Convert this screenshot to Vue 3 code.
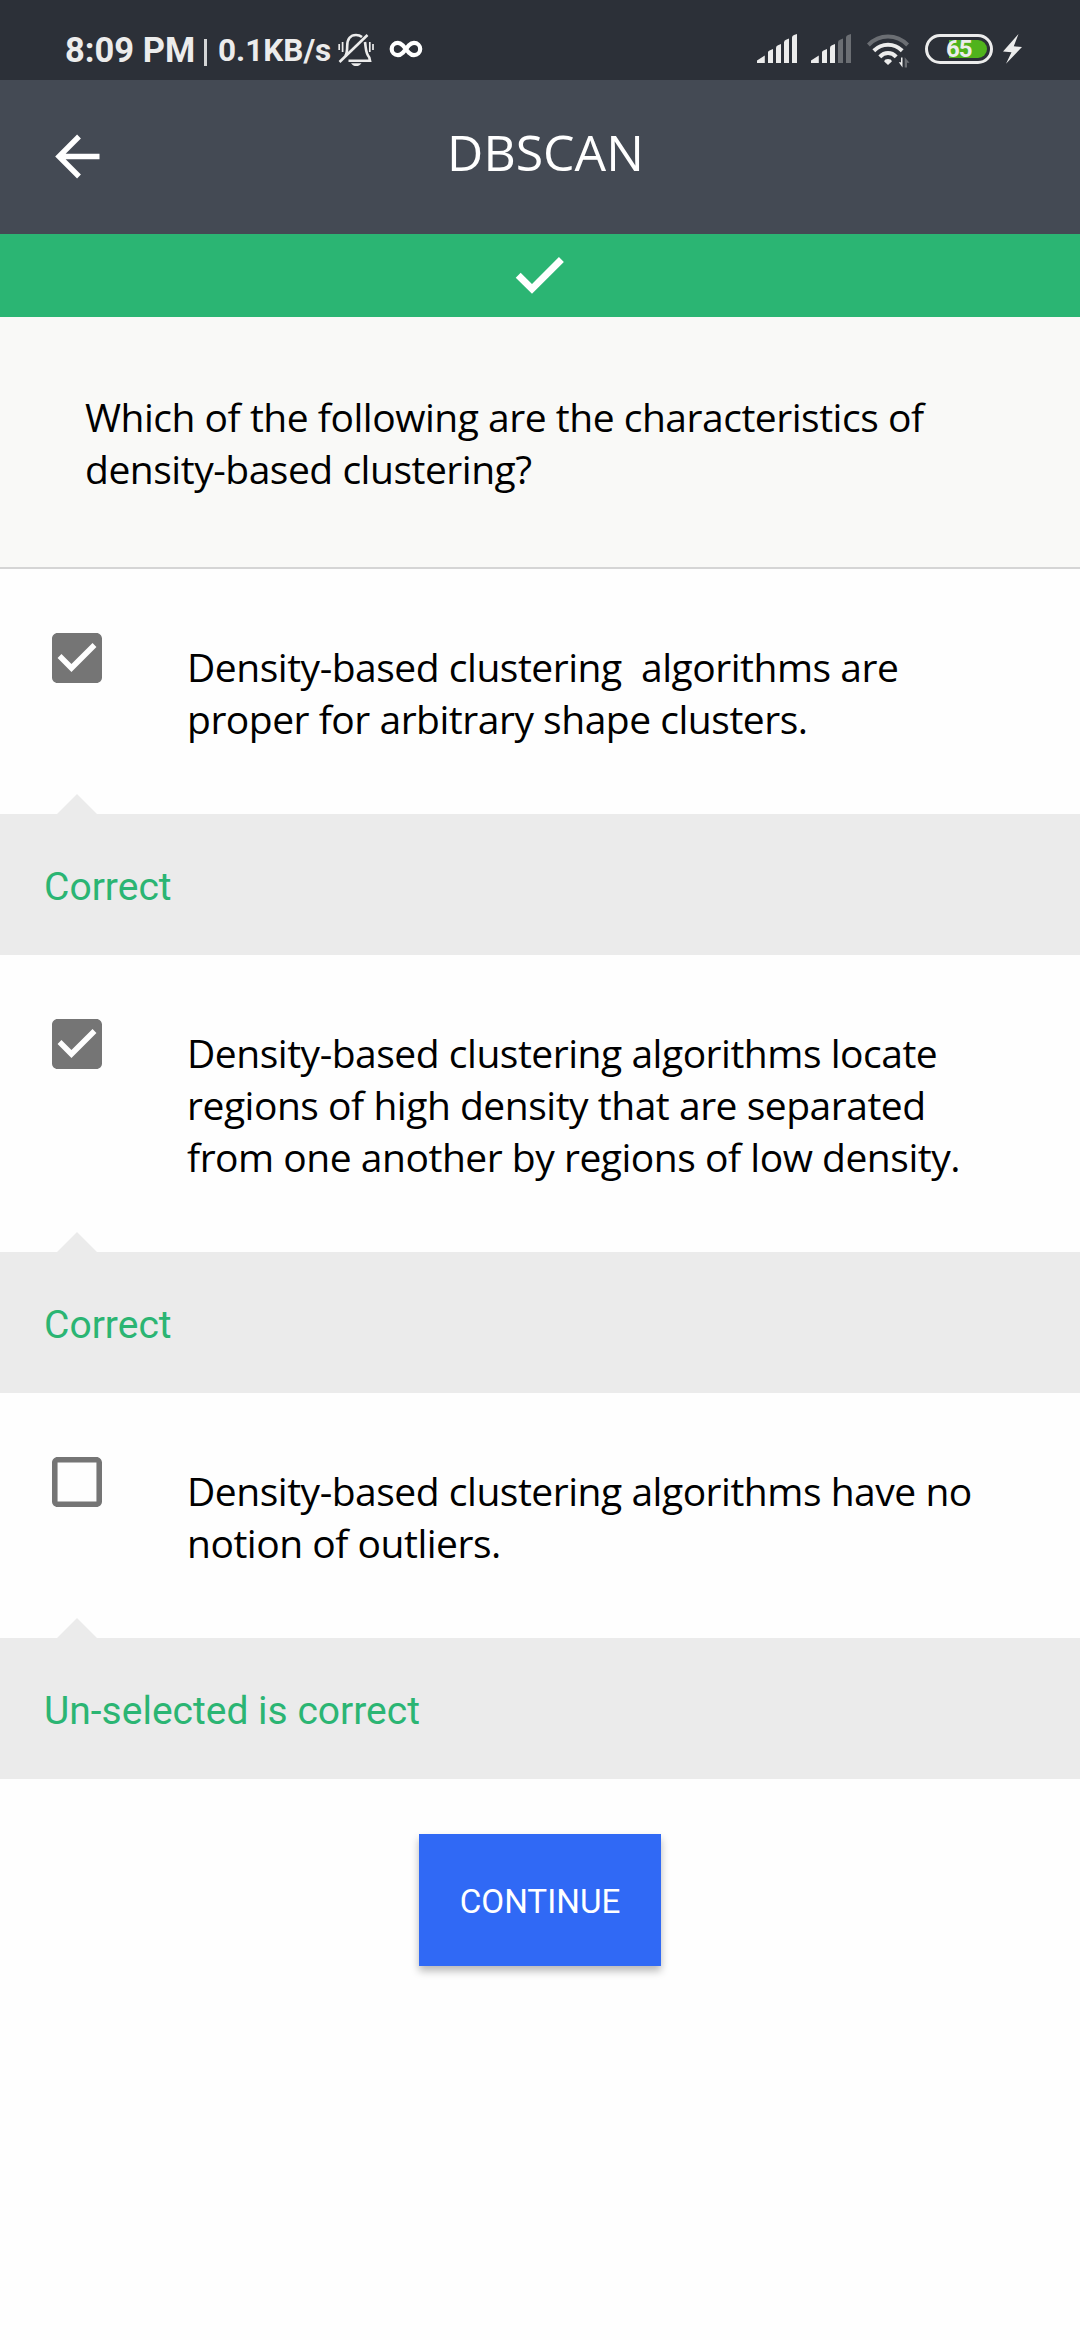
<script setup>
const options = [
  {
    checked: true,
    lines: ['Density-based clustering\u00a0 algorithms are', 'proper for arbitrary shape clusters.'],
    feedback: 'Correct'
  },
  {
    checked: true,
    lines: [
      'Density-based clustering algorithms locate',
      'regions of high density that are separated',
      'from one another by regions of low density.'
    ],
    feedback: 'Correct'
  },
  {
    checked: false,
    lines: ['Density-based clustering algorithms have no', 'notion of outliers.'],
    feedback: 'Un-selected is correct'
  }
]
</script>

<template>
  <div class="screen">
    <div class="status">
      <span class="clock">8:09 PM</span>
      <span class="divider"></span>
      <span class="speed">0.1KB/s</span>
      <svg class="bell" width="36" height="34" viewBox="338 33 36 34" fill="none" stroke="#ececec" stroke-width="2.6">
        <path d="M345.3 56C347 53.5 347.2 51 347.2 46C347.2 39 350.5 35 356 35C358.5 35 360.5 35.8 362 37" />
        <path d="M365 42C366.2 50 365.5 53 369.3 57.5L370 60.8H348.5" />
        <path d="M339.5 62L367.5 35" stroke-width="2.6" />
        <path d="M339.2 44V50M342.6 42V52M369.8 42V52M373 44V50" stroke-width="1.7" />
        <path d="M351 63.2H361.5C360 65.2 358.3 66 356.2 66S352.5 65.2 351 63.2Z" fill="#ececec" stroke="none" />
      </svg>
      <svg class="infinity" width="34" height="18" viewBox="389 40 34 18" fill="none" stroke="#ffffff" stroke-width="4.2">
        <path d="M405.8 49L402.6 45.2C400.9 43.5 399.6 42.8 397.9 42.8A6.2 6.2 0 0 0 397.9 55.2C399.8 55.2 401.3 54.3 402.8 52.8L409 45.2C410.6 43.5 412.1 42.8 414 42.8A6.2 6.2 0 0 1 414 55.2C412.1 55.2 410.6 54.5 409 52.8L405.8 49Z" />
      </svg>
      <div class="indicators">
        <svg width="41" height="30" viewBox="757 34 41 30" fill="#ececec">
          <path d="M757 63V60.5L764.8 55.5V63ZM768 63V52.5Q768 51 769.5 50.5L773 49V63ZM776 63V48Q776 46 778 45.2L781 44V63ZM784 63V42.5Q784 40.5 786 39.8L789 38.5V63ZM792 63V37.5Q792 35.5 794 35L797 34V63Z" />
        </svg>
        <svg class="signal-second" width="41" height="30" viewBox="757 34 41 30" fill="#ececec">
          <path d="M757 63V60.5L764.8 55.5V63ZM768 63V52.5Q768 51 769.5 50.5L773 49V63ZM776 63V48Q776 46 778 45.2L781 44V63Z" />
          <path fill="#6b6e73" d="M784 63V42.5Q784 40.5 786 39.8L789 38.5V63ZM792 63V37.5Q792 35.5 794 35L797 34V63Z" />
        </svg>
        <svg class="wifi" width="43" height="34" viewBox="867 33.5 43 34" fill="none" stroke-width="4">
          <path d="M868.4 44.5C879.5 33.3 896.5 33.3 907.6 44.5" stroke="#6b6e73" />
          <path d="M873.8 50.3C882 42.3 894 42.3 902.2 50.3" stroke="#ececec" />
          <path d="M879.8 56.3C884.6 51.2 891.4 51.2 896.2 56.3" stroke="#ececec" />
          <path d="M884.2 61C884.2 57.7 891.8 57.7 891.8 61L888 64.5Z" fill="#ececec" stroke="none" />
          <path d="M902.5 57V67L898.8 61.8H901V57Z" fill="#ececec" stroke="none" />
          <path d="M904.7 67V56.8L909.5 62.3H907V67Z" fill="#6b6e73" stroke="none" />
        </svg>
        <div class="battery"><div class="charge"></div><span class="percent">65</span></div>
        <svg class="bolt" width="20" height="30" viewBox="1003 34 20 30" fill="#ececec">
          <path d="M1018.5 34L1003 51.5L1011.5 52.3L1006 63.8L1022 47L1013.8 46.3Z" />
        </svg>
      </div>
    </div>

    <header class="app-bar">
      <svg class="back" width="46" height="46" viewBox="0 0 46 46" fill="none" stroke="#fff" stroke-width="5.4">
        <path d="M44.5 22.5H4M24 2.5L4 22.5L24 42.5" />
      </svg>
      <h1>DBSCAN</h1>
    </header>

    <div class="result">
      <svg width="50" height="40" viewBox="0 0 50 40" fill="none" stroke="#fff" stroke-width="7">
        <path d="M3.2 19.2L17 32.9L46.4 3.6" />
      </svg>
    </div>

    <section class="question">
      <p>Which of the following are the characteristics of<br />density-based clustering?</p>
    </section>

    <section v-for="(option, i) in options" :key="i">
      <div class="option">
        <svg class="box" width="50" height="50" viewBox="3 3 18 18" fill="#757575">
          <path v-if="option.checked" d="M19 3H5c-1.11 0-2 .9-2 2v14c0 1.1.89 2 2 2h14c1.11 0 2-.9 2-2V5c0-1.1-.89-2-2-2zm-9 14l-5-5 1.41-1.41L10 14.17l7.59-7.59L19 8l-9 9z" />
          <path v-else d="M19 5v14H5V5h14m0-2H5c-1.1 0-2 .9-2 2v14c0 1.1.9 2 2 2h14c1.1 0 2-.9 2-2V5c0-1.1-.9-2-2-2z" />
        </svg>
        <p>
          <span v-for="line in option.lines" :key="line" class="line">{{ line }}</span>
        </p>
      </div>
      <div class="feedback">{{ option.feedback }}</div>
    </section>

    <div class="actions">
      <button type="button">CONTINUE</button>
    </div>
  </div>
</template>

<style>
body {
  margin: 0;
  background: #fefefe;
}
</style>

<style scoped>
.screen {
  width: 1080px;
  height: 2340px;
  overflow: hidden;
  background: #fefefe;
  color: #000;
  font-family: "Open Sans", "Noto Sans", sans-serif;
}
svg {
  display: block;
  flex: none;
}
p,
h1 {
  margin: 0;
  font-weight: 400;
}
.status {
  display: flex;
  align-items: flex-start;
  box-sizing: border-box;
  height: 80px;
  padding-left: 65px;
  background: #2c3038;
  color: #ececec;
  font-family: Roboto, sans-serif;
  font-weight: 700;
  white-space: nowrap;
}
.clock {
  width: 139px;
  padding-top: 30px;
  font-size: 34.5px;
  line-height: 40px;
}
.divider {
  width: 3px;
  height: 27px;
  margin-top: 39px;
  background: #d4d5d6;
}
.speed {
  width: 131px;
  padding: 31px 0 0 11px;
  box-sizing: border-box;
  font-size: 31.5px;
  line-height: 40px;
}
.bell {
  margin-top: 33px;
}
.infinity {
  margin: 40px 0 0 15px;
}
.indicators {
  display: flex;
  align-items: flex-start;
  margin-left: auto;
  padding: 34px 57px 0 0;
}
.signal-second {
  margin-left: 13px;
}
.wifi {
  margin-left: 15px;
}
.battery {
  position: relative;
  box-sizing: border-box;
  width: 68px;
  height: 30px;
  margin-left: 15px;
  border: 3px solid #ececec;
  border-radius: 15px;
}
.charge {
  width: 38px;
  height: 18px;
  margin: 3px 3px 0 auto;
  border-radius: 0 9px 9px 0;
  background: #50b31c;
}
.percent {
  position: absolute;
  top: 0;
  left: 18px;
  font-size: 24px;
  line-height: 25px;
  letter-spacing: -1px;
}
.bolt {
  margin-left: 10px;
}
.app-bar {
  display: grid;
  grid-template-columns: 55px 1fr 44px;
  align-items: start;
  height: 154px;
  background: #444a54;
  color: #fff;
}
.back {
  margin: 54px 0 0 55px;
}
.app-bar h1 {
  padding-top: 38px;
  font-size: 50px;
  line-height: 68px;
  text-align: center;
}
.result {
  display: flex;
  justify-content: center;
  box-sizing: border-box;
  height: 83px;
  padding-top: 22px;
  background: #2bb573;
}
.question {
  box-sizing: border-box;
  height: 252px;
  padding: 74px 85px 0;
  border-bottom: 2px solid #d5d5d5;
  background: #f9f9f7;
}
.question p,
.option p {
  font-size: 39px;
  line-height: 52px;
  letter-spacing: -0.48px;
  white-space: nowrap;
}
.option {
  display: flex;
  align-items: flex-start;
  padding: 0 0 69px 52px;
}
.box {
  margin-top: 64px;
}
.option p {
  padding: 72px 0 0 85px;
}
.line {
  display: block;
}
.feedback {
  position: relative;
  box-sizing: border-box;
  height: 141px;
  padding: 50px 44px 0;
  background: #ebebeb;
  color: #2bb573;
  font-family: Roboto, sans-serif;
  font-size: 39px;
  line-height: 46px;
}
.feedback::before {
  content: "";
  position: absolute;
  top: -20px;
  left: 57px;
  border: 20px solid transparent;
  border-top: 0;
  border-bottom-color: #ebebeb;
}
.actions {
  display: flex;
  justify-content: center;
  padding-top: 55px;
}
button {
  width: 242px;
  height: 132px;
  padding: 4px 0 0;
  border: 0;
  background: #3069f5;
  box-shadow: 0 5px 8px rgba(0, 0, 0, 0.28);
  color: #fff;
  font: 400 33.2px/40px Roboto, sans-serif;
}
</style>
